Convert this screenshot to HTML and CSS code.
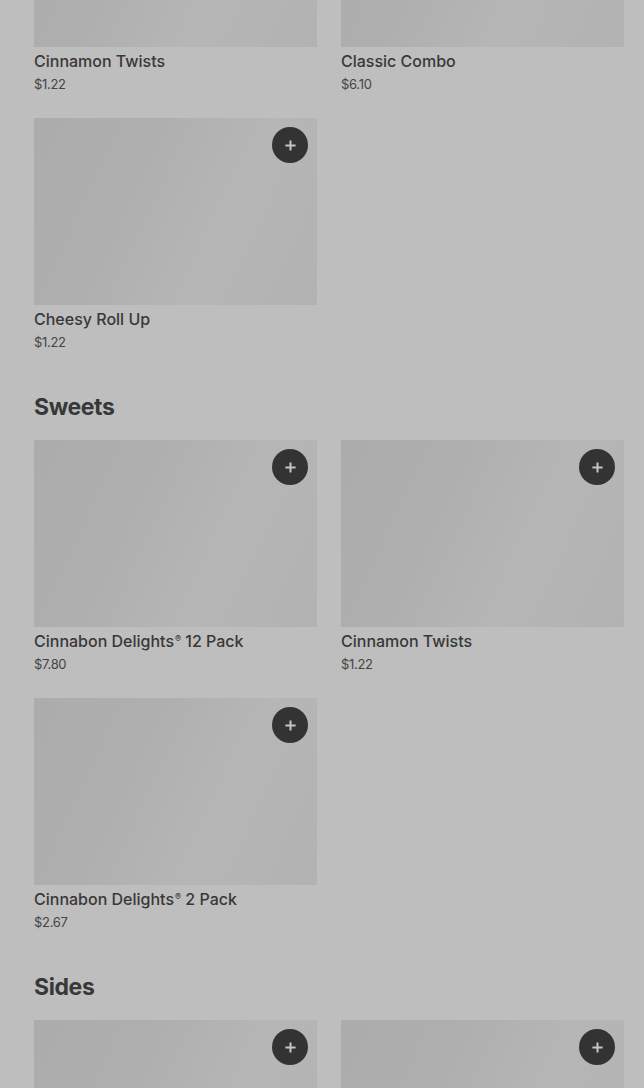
FILE: index.html
```html
<!DOCTYPE html>
<html lang="en">
<head>
    <meta charset="UTF-8">
    <meta name="viewport" content="width=device-width, initial-scale=1.0">
    <title>Menu</title>
    <link rel="stylesheet" href="styles.css">
</head>
<body>
    <main class="menu">
        <section class="section">
            <div class="grid">
                <div class="item">
                    <div class="thumb">
                        <button class="add" aria-label="Add"><svg viewBox="0 0 14 14"><path d="M7 1.5v11M1.5 7h11"/></svg></button>
                    </div>
                    <div class="name">Cinnamon Twists</div>
                    <div class="price">$1.22</div>
                </div>
                <div class="item">
                    <div class="thumb">
                        <button class="add" aria-label="Add"><svg viewBox="0 0 14 14"><path d="M7 1.5v11M1.5 7h11"/></svg></button>
                    </div>
                    <div class="name">Classic Combo</div>
                    <div class="price">$6.10</div>
                </div>
                <div class="item">
                    <div class="thumb">
                        <button class="add" aria-label="Add"><svg viewBox="0 0 14 14"><path d="M7 1.5v11M1.5 7h11"/></svg></button>
                    </div>
                    <div class="name">Cheesy Roll Up</div>
                    <div class="price">$1.22</div>
                </div>
            </div>
        </section>

        <section class="section">
            <h2>Sweets</h2>
            <div class="grid">
                <div class="item">
                    <div class="thumb">
                        <button class="add" aria-label="Add"><svg viewBox="0 0 14 14"><path d="M7 1.5v11M1.5 7h11"/></svg></button>
                    </div>
                    <div class="name">Cinnabon Delights<span class="reg">®</span> 12 Pack</div>
                    <div class="price">$7.80</div>
                </div>
                <div class="item">
                    <div class="thumb">
                        <button class="add" aria-label="Add"><svg viewBox="0 0 14 14"><path d="M7 1.5v11M1.5 7h11"/></svg></button>
                    </div>
                    <div class="name">Cinnamon Twists</div>
                    <div class="price">$1.22</div>
                </div>
                <div class="item">
                    <div class="thumb">
                        <button class="add" aria-label="Add"><svg viewBox="0 0 14 14"><path d="M7 1.5v11M1.5 7h11"/></svg></button>
                    </div>
                    <div class="name">Cinnabon Delights<span class="reg">®</span> 2 Pack</div>
                    <div class="price">$2.67</div>
                </div>
            </div>
        </section>

        <section class="section">
            <h2>Sides</h2>
            <div class="grid">
                <div class="item">
                    <div class="thumb">
                        <button class="add" aria-label="Add"><svg viewBox="0 0 14 14"><path d="M7 1.5v11M1.5 7h11"/></svg></button>
                    </div>
                </div>
                <div class="item">
                    <div class="thumb">
                        <button class="add" aria-label="Add"><svg viewBox="0 0 14 14"><path d="M7 1.5v11M1.5 7h11"/></svg></button>
                    </div>
                </div>
            </div>
        </section>
    </main>
</body>
</html>
```

FILE: styles.css
```css
* {
    box-sizing: border-box;
    margin: 0;
    padding: 0;
}

body {
    background: #bebebe;
    font-family: Inter, "Noto Sans", sans-serif;
    color: #363636;
    overflow: hidden;
}

/* page is scrolled: first row starts above the viewport */
.menu {
    margin-top: -140px;
    padding: 0 20px 0 34px;
}

.section {
    margin-bottom: 40px;
}

.section h2 {
    font-size: 23px;
    line-height: 32px;
    font-weight: 700;
    color: #383838;
    letter-spacing: -0.4px;
    margin-bottom: 17px;
}

.grid {
    display: grid;
    grid-template-columns: 1fr 1fr;
    column-gap: 24px;
    row-gap: 25px;
}

.thumb {
    position: relative;
    height: 187px;
    background: linear-gradient(115deg, #acacac 0%, #afafaf 35%, #b6b6b6 65%, #b2b2b2 100%);
}

.add {
    position: absolute;
    top: 9px;
    right: 9px;
    width: 36px;
    height: 36px;
    border: none;
    border-radius: 50%;
    background: #333333;
    display: flex;
    align-items: center;
    justify-content: center;
    cursor: pointer;
}

.add svg {
    width: 13px;
    height: 13px;
    fill: none;
    stroke: #c4c4c4;
    stroke-width: 2.2;
}

.name {
    margin-top: 4px;
    height: 20px;
    font-size: 16px;
    line-height: 20px;
    font-weight: 500;
    color: #383838;
}

.reg {
    font-size: 9px;
    line-height: 0;
    vertical-align: 5px;
    margin-left: 1px;
}

.price {
    margin-top: 4px;
    font-size: 13px;
    line-height: 18px;
    color: #454545;
    letter-spacing: -0.3px;
}
```
